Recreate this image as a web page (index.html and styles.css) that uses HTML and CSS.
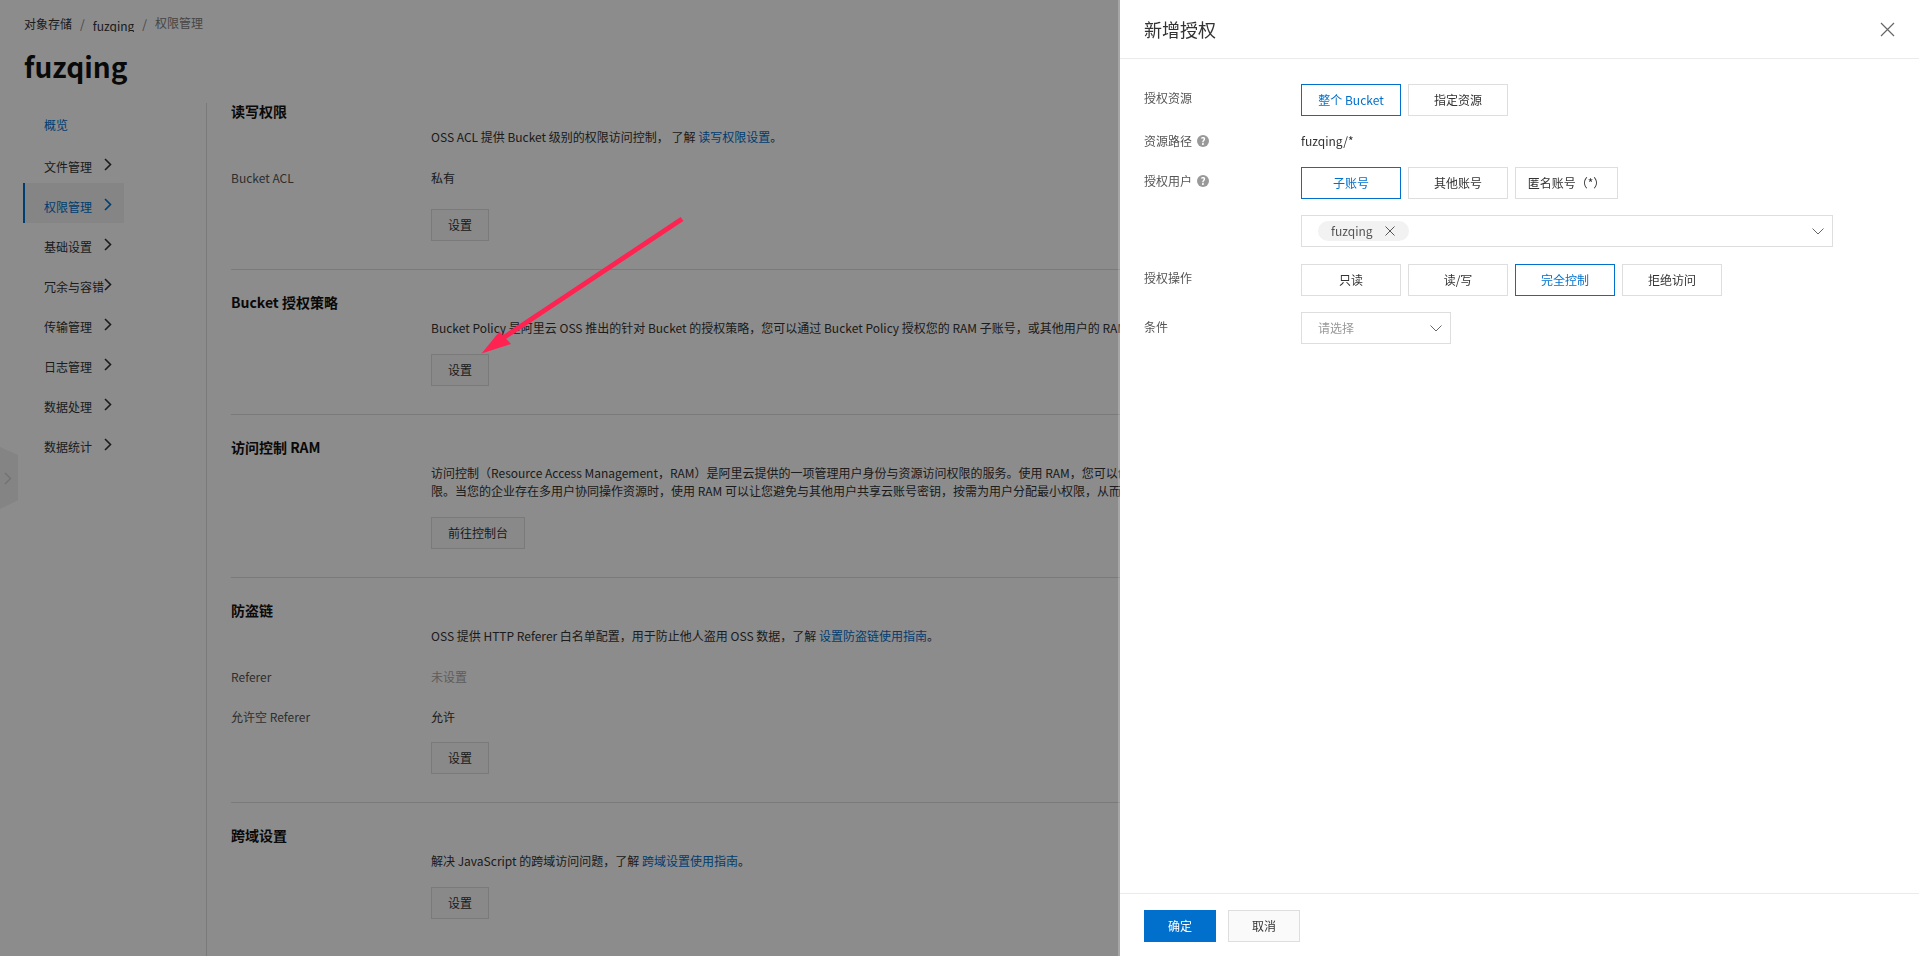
FILE: index.html
```html
<!DOCTYPE html>
<html lang="zh-CN">
<head>
<meta charset="utf-8">
<title>权限管理</title>
<link rel="stylesheet" href="styles.css">
</head>
<body>
<div class="page">
  <nav class="crumbs">
    <a class="crumb">对象存储</a><span class="crumb-sep">/</span><a class="crumb crumb-clip">fuzqing</a><span class="crumb-sep">/</span><span class="crumb crumb-current">权限管理</span>
  </nav>
  <h1 class="page-title">fuzqing</h1>
  <div class="layout">
    <aside class="sidebar">
      <a class="nav-item nav-overview">概览</a>
      <a class="nav-item"><span class="nav-label">文件管理</span><svg class="nav-chevron" viewBox="0 0 8 13"><path d="M1 1l5.5 5.500L1 12"/></svg></a>
      <a class="nav-item is-active"><span class="nav-label">权限管理</span><svg class="nav-chevron" viewBox="0 0 8 13"><path d="M1 1l5.5 5.500L1 12"/></svg></a>
      <a class="nav-item"><span class="nav-label">基础设置</span><svg class="nav-chevron" viewBox="0 0 8 13"><path d="M1 1l5.5 5.500L1 12"/></svg></a>
      <a class="nav-item"><span class="nav-label">冗余与容错</span><svg class="nav-chevron" viewBox="0 0 8 13"><path d="M1 1l5.5 5.500L1 12"/></svg></a>
      <a class="nav-item"><span class="nav-label">传输管理</span><svg class="nav-chevron" viewBox="0 0 8 13"><path d="M1 1l5.5 5.500L1 12"/></svg></a>
      <a class="nav-item"><span class="nav-label">日志管理</span><svg class="nav-chevron" viewBox="0 0 8 13"><path d="M1 1l5.5 5.500L1 12"/></svg></a>
      <a class="nav-item"><span class="nav-label">数据处理</span><svg class="nav-chevron" viewBox="0 0 8 13"><path d="M1 1l5.5 5.500L1 12"/></svg></a>
      <a class="nav-item"><span class="nav-label">数据统计</span><svg class="nav-chevron" viewBox="0 0 8 13"><path d="M1 1l5.5 5.500L1 12"/></svg></a>
    </aside>
    <main class="main">
      <section class="section">
        <h2 class="section-title">读写权限</h2>
        <p class="desc">OSS ACL 提供 Bucket 级别的权限访问控制， 了解 <a class="link">读写权限设置</a>。</p>
        <div class="field field-first"><span class="field-label">Bucket ACL</span><span class="field-value">私有</span></div>
        <div class="actions actions-wide"><button class="btn">设置</button></div>
      </section>
      <section class="section">
        <h2 class="section-title">Bucket 授权策略</h2>
        <p class="desc">Bucket Policy 是阿里云 OSS 推出的针对 Bucket 的授权策略，您可以通过 Bucket Policy 授权您的 RAM 子账号，或其他用户的 RAM</p>
        <div class="actions"><button class="btn">设置</button></div>
      </section>
      <section class="section">
        <h2 class="section-title">访问控制 RAM</h2>
        <p class="desc">访问控制（Resource Access Management，RAM）是阿里云提供的一项管理用户身份与资源访问权限的服务。使用 RAM，您可以创</p>
        <p class="desc desc-next">限。当您的企业存在多用户协同操作资源时，使用 RAM 可以让您避免与其他用户共享云账号密钥，按需为用户分配最小权限，从而</p>
        <div class="actions"><button class="btn">前往控制台</button></div>
      </section>
      <section class="section">
        <h2 class="section-title">防盗链</h2>
        <p class="desc">OSS 提供 HTTP Referer 白名单配置，用于防止他人盗用 OSS 数据，了解 <a class="link">设置防盗链使用指南</a>。</p>
        <div class="field field-first"><span class="field-label">Referer</span><span class="field-value is-muted">未设置</span></div>
        <div class="field field-next"><span class="field-label">允许空 Referer</span><span class="field-value">允许</span></div>
        <div class="actions actions-tight"><button class="btn">设置</button></div>
      </section>
      <section class="section">
        <h2 class="section-title">跨域设置</h2>
        <p class="desc">解决 JavaScript 的跨域访问问题，了解 <a class="link">跨域设置使用指南</a>。</p>
        <div class="actions"><button class="btn">设置</button></div>
      </section>
    </main>
  </div>
</div>

<div class="side-handle"><svg class="side-handle-icon" viewBox="0 0 8 13"><path d="M1 1l5.500 5.500L1 12"/></svg></div>
<div class="overlay"></div>

<svg class="annotation" viewBox="0 0 220 150">
  <line class="annotation-shaft" x1="212" y1="9" x2="33" y2="128"/>
  <polygon class="annotation-head" points="11.500,143.500 29.500,121.500 41,134"/>
</svg>

<aside class="drawer">
  <header class="drawer-head">
    <h3 class="drawer-title">新增授权</h3>
    <svg class="drawer-close" viewBox="0 0 15 15"><path d="M1 1l13 13M14 1L1 14"/></svg>
  </header>
  <div class="drawer-body">
    <div class="form-row">
      <div class="form-label">授权资源</div>
      <div class="choices">
        <button class="choice is-on">整个 Bucket</button>
        <button class="choice">指定资源</button>
      </div>
    </div>
    <div class="form-row">
      <div class="form-label form-label-text">资源路径<span class="help">?</span></div>
      <div class="form-text">fuzqing/*</div>
    </div>
    <div class="form-row">
      <div class="form-label">授权用户<span class="help">?</span></div>
      <div class="form-stack">
        <div class="choices">
          <button class="choice is-on">子账号</button>
          <button class="choice">其他账号</button>
          <button class="choice choice-auto">匿名账号（*）</button>
        </div>
        <div class="select select-wide">
          <span class="tag">fuzqing<svg class="tag-close" viewBox="0 0 10 10"><path d="M.5.5l9 9M9.500.5l-9 9"/></svg></span>
          <svg class="select-chevron" viewBox="0 0 12 7"><path d="M.5.5L6 6 11.500.5"/></svg>
        </div>
      </div>
    </div>
    <div class="form-row">
      <div class="form-label">授权操作</div>
      <div class="choices">
        <button class="choice">只读</button>
        <button class="choice">读/写</button>
        <button class="choice is-on">完全控制</button>
        <button class="choice">拒绝访问</button>
      </div>
    </div>
    <div class="form-row">
      <div class="form-label form-label-low">条件</div>
      <div class="select select-small">
        <span class="placeholder">请选择</span>
        <svg class="select-chevron" viewBox="0 0 12 7"><path d="M.5.5L6 6 11.500.5"/></svg>
      </div>
    </div>
  </div>
  <footer class="drawer-foot">
    <button class="foot-btn foot-primary">确定</button>
    <button class="foot-btn">取消</button>
  </footer>
</aside>
</body>
</html>
```
FILE: styles.css
```css
* { box-sizing: border-box; }
html, body { height: 100%; }
body {
  margin: 0;
  overflow: hidden;
  background: #fff;
  color: #333;
  font-family: "Noto Sans CJK SC", "Noto Sans", sans-serif;
  font-size: 12px;
  line-height: 18px;
}
h1, h2, h3, p { margin: 0; }
button { font: inherit; cursor: pointer; }

.page { width: 1120px; height: 956px; padding: 15px 0 0 24px; overflow: hidden; }

.crumbs { display: flex; align-items: center; height: 18px; }
.crumb { color: #333; }
.crumb-clip { height: 15px; overflow: hidden; }
.crumb-current { color: #808080; margin-top: -3px; }
.crumb-sep { color: #808080; margin: 0 8px; }

.page-title { margin-top: 13px; font-size: 28px; line-height: 40px; font-weight: 700; color: #111; }

.layout { display: flex; align-items: stretch; margin: 17px 0 0 -1px; height: 853px; }

.sidebar { flex: none; width: 184px; border-right: 1px solid #dedede; }
.nav-item {
  display: flex;
  align-items: center;
  justify-content: space-between;
  width: 101px;
  height: 40px;
  padding: 0 12px 0 21px;
  color: #333;
}
.nav-label { margin-top: 7px; white-space: nowrap; }
.nav-chevron { width: 8px; height: 13px; margin-top: 2px; fill: none; stroke: currentColor; stroke-width: 1.6; flex: none; }
.nav-overview { color: #0070cc; padding-top: 4px; }
.nav-item.is-active { color: #0070cc; background: #f2f2f2; border-left: 2px solid #0070cc; padding-left: 19px; }

.main { flex: 1; min-width: 0; padding-left: 24px; }
.section { padding: 24px 0 28px; border-bottom: 1px solid #dedede; }
.section:first-child { padding-top: 0; }
.section:last-child { border-bottom: 0; }
.section-title { font-size: 14px; line-height: 16px; font-weight: 700; color: #111; }
.desc { margin: 9px 0 0 200px; white-space: nowrap; color: #333; }
.desc-next { margin-top: 0; }
.link { color: #0070cc; }

.field { display: flex; }
.field-first { margin-top: 23px; }
.field-next { margin-top: 22px; }
.field-label { width: 200px; color: #555; }
.field-value { color: #333; }
.field-value.is-muted { color: #aaa; }

.actions { margin: 17px 0 0 200px; }
.actions-wide { margin-top: 22px; }
.actions-tight { margin-top: 16px; }
.btn {
  display: block;
  height: 32px;
  padding: 0 16px;
  background: #fafafa;
  border: 1px solid #dedede;
  color: #333;
}

.side-handle {
  position: absolute;
  left: 0;
  top: 447px;
  width: 18px;
  height: 62px;
  display: flex;
  align-items: center;
  justify-content: center;
  background: #f0f0f0;
  clip-path: polygon(0 0, 100% 13%, 100% 86%, 0 100%);
}
.side-handle-icon { width: 8px; height: 13px; margin-left: -2px; fill: none; stroke: #cfcfcf; stroke-width: 1.4; }

.overlay { position: fixed; inset: 0; background: rgba(0, 0, 0, .45); }

.annotation { position: absolute; left: 470px; top: 210px; width: 220px; height: 150px; }
.annotation-shaft { stroke: #ff2352; stroke-width: 5; }
.annotation-head { fill: #ff2352; }

.drawer {
  position: fixed;
  top: 0;
  right: 0;
  bottom: 0;
  width: 799px;
  display: flex;
  flex-direction: column;
  background: #fff;
  box-shadow: -2px 0 0 rgba(255, 255, 255, .22);
}
.drawer-head {
  flex: none;
  height: 59px;
  display: flex;
  align-items: center;
  justify-content: space-between;
  padding: 0 24px;
  border-bottom: 1px solid #ebebeb;
}
.drawer-title { font-size: 18px; line-height: 26px; font-weight: 400; color: #333; }
.drawer-close { width: 15px; height: 15px; fill: none; stroke: #666; stroke-width: 1.2; }

.drawer-body { flex: 1; padding: 25px 24px 0; display: flex; flex-direction: column; gap: 16px; }
.form-row { display: flex; }
.form-label { flex: none; width: 157px; margin-top: 5px; display: flex; align-items: center; height: 18px; color: #555; }
.form-label-text { margin-top: 0; }
.form-label-low { margin-top: 6px; }
.help {
  width: 12px;
  height: 12px;
  margin-left: 5px;
  border-radius: 50%;
  background: #999;
  color: #fff;
  font-size: 10px;
  line-height: 12px;
  font-weight: 700;
  text-align: center;
}
.form-text { height: 19px; color: #333; }
.form-stack { display: flex; flex-direction: column; gap: 16px; padding-bottom: 1px; }

.choices { display: flex; gap: 7px; }
.choice {
  width: 100px;
  height: 32px;
  padding: 0;
  background: #fff;
  border: 1px solid #dedede;
  color: #333;
}
.choice-auto { width: 103px; }
.choice.is-on { border-color: #0070cc; color: #0070cc; }

.select {
  height: 32px;
  display: flex;
  align-items: center;
  justify-content: space-between;
  padding: 0 8px 0 16px;
  border: 1px solid #dedede;
  background: #fff;
}
.select-wide { width: 532px; }
.select-small { width: 150px; }
.tag {
  display: flex;
  align-items: center;
  height: 20px;
  padding: 0 14px 0 13px;
  border-radius: 10px;
  background: #f2f2f2;
  color: #555;
}
.tag-close { width: 10px; height: 10px; margin-left: 12px; fill: none; stroke: #555; stroke-width: 1; }
.select-chevron { width: 12px; height: 7px; fill: none; stroke: #666; stroke-width: 1; }
.placeholder { color: #999; }

.drawer-foot {
  flex: none;
  height: 63px;
  display: flex;
  gap: 12px;
  padding: 16px 24px 0;
  border-top: 1px solid #ebebeb;
}
.foot-btn {
  width: 72px;
  height: 32px;
  padding: 0;
  background: #fafafa;
  border: 1px solid #dedede;
  color: #333;
}
.foot-primary { background: #0070cc; border-color: #0070cc; color: #fff; }
```
